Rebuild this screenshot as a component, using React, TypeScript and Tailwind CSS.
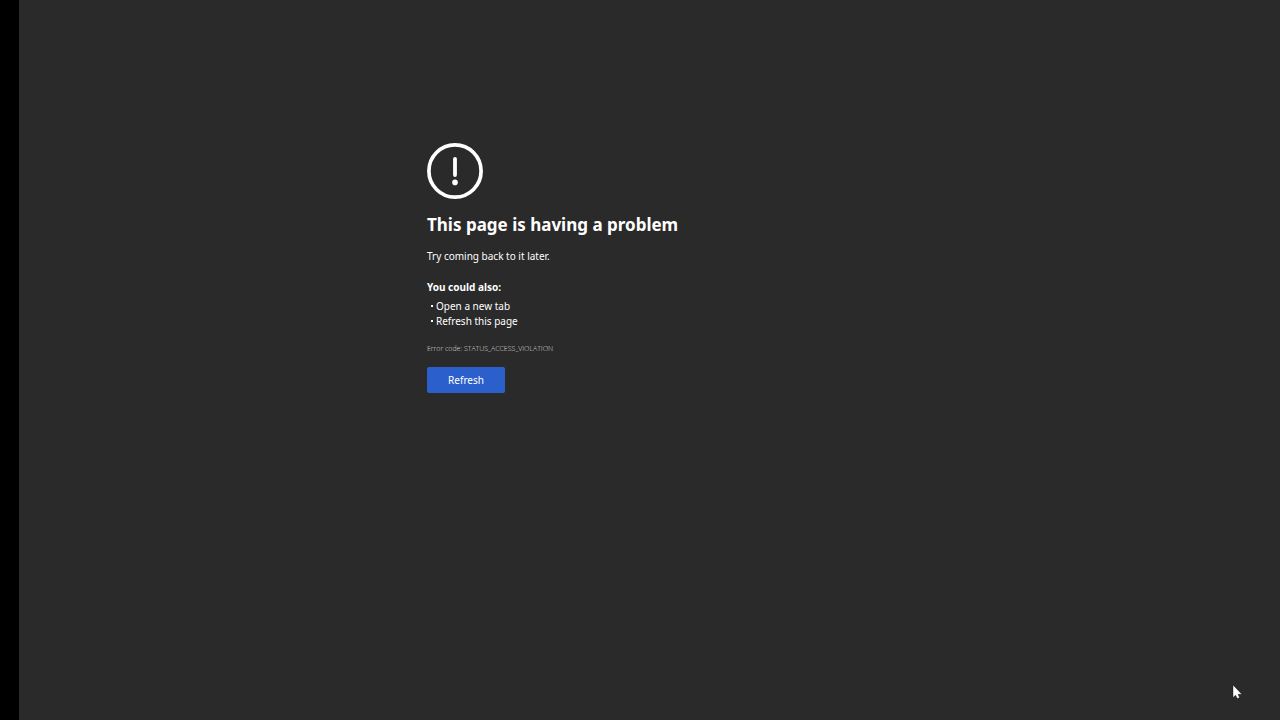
import React from 'react';

const suggestions = ['Open a new tab', 'Refresh this page'];

const AlertIcon: React.FC = () => (
    <svg className="block size-14" viewBox="0 0 56 56" fill="none" aria-hidden="true">
        <circle cx="28" cy="28" r="26.1" stroke="#fff" strokeWidth="3.7" />
        <path d="M28 15.8v16.2" stroke="#fff" strokeWidth="3.8" strokeLinecap="round" />
        <circle cx="28" cy="39.4" r="2.8" fill="#fff" />
    </svg>
);

const Cursor: React.FC = () => (
    <svg className="pointer-events-none absolute right-[37px] bottom-[20px] h-[16px] w-[11px]" viewBox="0 0 11 16" aria-hidden="true">
        <path d="M1 1v12.4l2.6-2.2 1.7 3.4 2.3-1-1.6-3.3h3.8z" fill="#fff" stroke="#111" strokeWidth="0.4" />
    </svg>
);

const App: React.FC = () => {
    const handleRefresh = () => window.location.reload();

    return (
        <div className="relative flex min-h-screen bg-black font-['Noto_Sans',sans-serif] text-[10px] leading-[15px] text-white">
            <main className="ml-[19px] flex-1 bg-[#2a2a2a] px-4 pt-[143px] pb-10">
                <div className="mx-auto max-w-[445px]">
                    <AlertIcon />
                    <h1 className="mt-3 text-[17px] leading-[27px] font-bold">This page is having a problem</h1>
                    <p className="mt-[11px]">Try coming back to it later.</p>

                    <h2 className="mt-4 font-bold">You could also:</h2>
                    <ul className="mt-1">
                        {suggestions.map(item => (
                            <li key={item} className="flex items-center gap-[3px] pl-1">
                                <span className="mb-[2px] size-[2px] bg-white" />
                                {item}
                            </li>
                        ))}
                    </ul>

                    <p className="mt-3 font-['Open_Sans',sans-serif] text-[7px] font-light text-[#dedede]">Error code: STATUS_ACCESS_VIOLATION</p>
                    <button type="button" onClick={handleRefresh} className="mt-[11px] block h-[26px] w-[78px] cursor-pointer rounded-[2px] bg-[#2b5fcb]">
                        Refresh
                    </button>
                </div>
            </main>
            <Cursor />
        </div>
    );
};

export default App;
